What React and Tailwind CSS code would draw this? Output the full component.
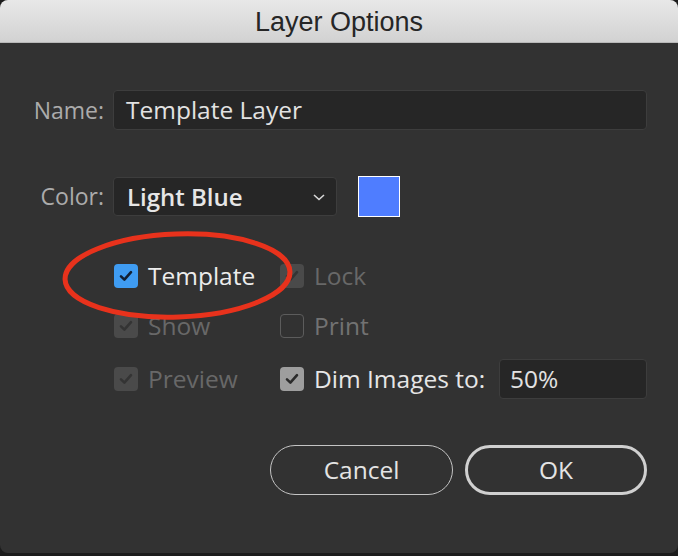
import React from "react";

const font = { fontFamily: '"Open Sans", "Noto Sans", sans-serif' };

function Check({ variant }) {
  if (variant === "none") {
    return <span className="w-[24px] h-[24px] rounded-[4px] border-[1.5px] border-[#5c5c5c] shrink-0" />;
  }
  const box =
    variant === "blue"
      ? "bg-[#3f9cf2]"
      : variant === "light"
      ? "bg-[#9e9e9e]"
      : "bg-[#4a4a4a]";
  const stroke = variant === "blue" ? "#122033" : variant === "light" ? "#2b2b2b" : "#343434";
  return (
    <span className={`w-[24px] h-[24px] rounded-[4px] ${box} flex items-center justify-center shrink-0`}>
      <svg width="18" height="18" viewBox="0 0 18 18">
        <path d="M4 9.4 L7.4 12.6 L14 5.2" fill="none" stroke={stroke} strokeWidth="2.6" strokeLinecap="round" strokeLinejoin="round" />
      </svg>
    </span>
  );
}

function Item({ variant, label, color }) {
  return (
    <div className="flex items-center gap-[10px]">
      <Check variant={variant} />
      <span className={`text-[24.5px] leading-none ${color}`}>{label}</span>
    </div>
  );
}

export default function App() {
  return (
    <div className="w-[678px] h-[556px] bg-[#1c1c1c] relative overflow-hidden" style={font}>
      <div className="h-[553px] rounded-[8px] bg-[#323232] flex flex-col overflow-hidden">
        <div
          className="h-[43px] shrink-0 bg-gradient-to-b from-[#e8e8e8] to-[#d2d2d2] border-b border-[#b8b8b8] flex items-center justify-center pt-[2px] text-[27px] text-[#262626]"
          style={{ fontFamily: '"Liberation Sans", Arial, sans-serif' }}
        >
          Layer Options
        </div>

        <div className="flex flex-col">
          {/* Name row */}
          <div className="flex items-center mt-[47px]">
            <span className="w-[104px] text-right text-[23px] text-[#ababab]">Name:</span>
            <div className="ml-[9px] w-[534px] h-[40px] rounded-[4px] bg-[#262626] border border-[#3d3d3d] flex items-center pl-[12px] text-[24.5px] text-[#e2e2e2]">
              Template Layer
            </div>
          </div>

          {/* Color row */}
          <div className="flex items-center mt-[46px]">
            <span className="w-[104px] text-right text-[23px] text-[#ababab]">Color:</span>
            <div className="ml-[9px] w-[224px] h-[39px] rounded-[4px] bg-[#262626] border border-[#3d3d3d] flex items-center justify-between pl-[13px] pr-[10px]">
              <span className="text-[24px] font-semibold text-[#e6e6e6]">Light Blue</span>
              <svg width="14" height="10" viewBox="0 0 14 10">
                <path d="M2 3 L7 7.5 L12 3" fill="none" stroke="#d8d8d8" strokeWidth="1.6" />
              </svg>
            </div>
            <div className="ml-[21px] w-[42px] h-[41px] bg-[#4f7dff] border border-white" />
          </div>

          {/* Checkbox rows */}
          <div className="ml-[114px] w-[533px] mt-[47px] flex flex-col">
            <div className="flex items-center h-[24px]">
              <div className="w-[166px]">
                <Item variant="blue" label="Template" color="text-[#ececec]" />
              </div>
              <Item variant="dim" label="Lock" color="text-[#686868]" />
            </div>
            <div className="flex items-center h-[24px] mt-[26px]">
              <div className="w-[166px]">
                <Item variant="dim" label="Show" color="text-[#686868]" />
              </div>
              <Item variant="none" label="Print" color="text-[#727272]" />
            </div>
            <div className="flex items-center h-[40px] mt-[21px]">
              <div className="w-[166px]">
                <Item variant="dim" label="Preview" color="text-[#686868]" />
              </div>
              <Item variant="light" label="Dim Images to:" color="text-[#e6e6e6]" />
              <div className="ml-auto w-[148px] h-[40px] rounded-[4px] bg-[#262626] border border-[#3d3d3d] flex items-center pl-[10px] text-[24.5px] text-[#e2e2e2]">
                50%
              </div>
            </div>
          </div>

          {/* Buttons */}
          <div className="flex mt-[46px] ml-[270px] gap-[12px]">
            <button className="w-[183px] h-[50px] rounded-full border-[1.5px] border-[#c4c4c4] text-[24.5px] text-[#e4e4e4]">
              Cancel
            </button>
            <button className="w-[182px] h-[50px] rounded-full border-[3px] border-[#d0d0d0] text-[24.5px] text-[#e4e4e4]">
              OK
            </button>
          </div>
        </div>
      </div>

      <svg className="absolute left-0 top-0 pointer-events-none" width="678" height="556">
        <ellipse cx="177.5" cy="275.5" rx="112.5" ry="41.5" fill="none" stroke="#e8321c" strokeWidth="5" transform="rotate(-2 177.5 275.5)" />
      </svg>
    </div>
  );
}
